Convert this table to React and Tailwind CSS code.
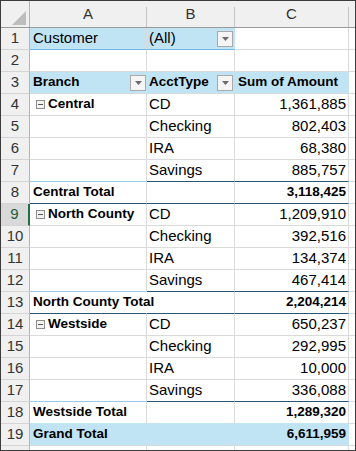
import React from "react";

const rows = [
  { n: 1, a: "Customer", b: "(All)", c: "", kind: "filter" },
  { n: 2, a: "", b: "", c: "", kind: "blank" },
  { n: 3, a: "Branch", b: "AcctType", c: "Sum of Amount", kind: "head" },
  { n: 4, a: "Central", b: "CD", c: "1,361,885", kind: "group" },
  { n: 5, a: "", b: "Checking", c: "802,403", kind: "item" },
  { n: 6, a: "", b: "IRA", c: "68,380", kind: "item" },
  { n: 7, a: "", b: "Savings", c: "885,757", kind: "last" },
  { n: 8, a: "Central Total", b: "", c: "3,118,425", kind: "total" },
  { n: 9, a: "North County", b: "CD", c: "1,209,910", kind: "group", selected: true },
  { n: 10, a: "", b: "Checking", c: "392,516", kind: "item" },
  { n: 11, a: "", b: "IRA", c: "134,374", kind: "item" },
  { n: 12, a: "", b: "Savings", c: "467,414", kind: "last" },
  { n: 13, a: "North County Total", b: "", c: "2,204,214", kind: "total", spill: true },
  { n: 14, a: "Westside", b: "CD", c: "650,237", kind: "group" },
  { n: 15, a: "", b: "Checking", c: "292,995", kind: "item" },
  { n: 16, a: "", b: "IRA", c: "10,000", kind: "item" },
  { n: 17, a: "", b: "Savings", c: "336,088", kind: "last" },
  { n: 18, a: "Westside Total", b: "", c: "1,289,320", kind: "totalLast" },
  { n: 19, a: "Grand Total", b: "", c: "6,611,959", kind: "grand" },
  { n: "", a: "", b: "", c: "", kind: "blank" },
];

const Dropdown = () => (
  <span className="flex h-4 w-4 shrink-0 items-center justify-center border border-[#a9a9a9] bg-[#f5f5f5]">
    <svg width="7" height="4" viewBox="0 0 7 4">
      <path d="M0 0h7L3.5 4z" fill="#6b6b6b" />
    </svg>
  </span>
);

const Collapse = () => (
  <span className="mr-[3px] ml-[6px] flex h-[9px] w-[9px] shrink-0 items-center justify-center border border-[#8e8e8e] bg-[#f2f2f2]">
    <span className="h-px w-[5px] bg-[#555]" />
  </span>
);

const ColHead = ({ label, w }) => (
  <div className={`flex ${w} h-full`}>
    <div className="flex-1 text-center text-[15px] leading-[26px] text-[#333]">{label}</div>
    <div className="mt-[6px] h-[20px] w-px bg-[#c4c4c4]" />
  </div>
);

function Row({ r }) {
  const blueAB = r.kind === "filter";
  const blueAll = r.kind === "head" || r.kind === "grand";
  const isTotal = r.kind === "total" || r.kind === "totalLast" || r.kind === "grand";
  const bold = r.kind === "head" || isTotal || r.kind === "group";

  let bA = "border-b-[#dadada]";
  let bB = "border-b-[#dadada]";
  let bC = "border-b-[#dadada]";
  if (r.kind === "filter") {
    bA = "border-b-[#6fb6e0]";
    bB = "border-b-[#6fb6e0]";
  }
  if (r.kind === "last") {
    bA = "border-b-[#9cc9e8]";
    bB = "border-b-[#2a5673]";
    bC = "border-b-[#2a5673]";
  }
  if (r.kind === "total") {
    bA = "border-b-[#2a5673]";
    bB = "border-b-[#2a5673]";
    bC = "border-b-[#2a5673]";
  }
  if (r.kind === "totalLast") {
    bA = "border-b-[#c1e4f5]";
    bB = "border-b-[#c1e4f5]";
    bC = "border-b-[#c1e4f5]";
  }

  const cellBase = "h-full border-b border-r flex items-center whitespace-nowrap";
  const bgAB = blueAB || blueAll ? "bg-[#c1e4f5]" : "bg-white";
  const bgC = blueAll ? "bg-[#c1e4f5]" : "bg-white";
  const rA = blueAll || r.spill ? "border-r-transparent" : "border-r-[#dadada]";
  const rB = blueAll ? "border-r-transparent" : blueAB ? "border-r-[#c1e4f5]" : "border-r-[#dadada]";
  const txtBold = "font-bold text-[13.5px]";
  const txtReg = "text-[15px]";

  return (
    <div className="flex h-[22px] shrink-0">
      <div
        className={`flex h-full w-[29px] shrink-0 items-center justify-center border-b border-r border-b-[#d4d4d4] text-[15px] ${
          r.selected ? "border-r-2 border-r-[#1e7145] bg-[#d9d9d9] text-[#1e5e3a]" : "border-r-[#b4b4b4] bg-[#f0f0f0] text-[#333]"
        }`}
      >
        {r.n}
      </div>
      <div className={`${cellBase} relative z-10 w-[117px] ${r.spill ? "overflow-visible" : "overflow-hidden"} ${bgAB} ${bA} ${rA}`}>
        {r.kind === "group" && <Collapse />}
        <span className={`${r.kind === "group" ? "" : "pl-[3px]"} flex-1 ${bold ? txtBold : txtReg}`}>{r.a}</span>
        {r.kind === "head" && <Dropdown />}
      </div>
      <div className={`${cellBase} w-[88px] overflow-hidden ${bgAB} ${bB} ${rB}`}>
        <span className={`flex-1 pl-[2px] ${r.kind === "head" ? txtBold : txtReg}`}>{r.b}</span>
        {(r.kind === "head" || r.kind === "filter") && (
          <span className="mr-px">
            <Dropdown />
          </span>
        )}
      </div>
      <div
        className={`${cellBase} w-[114px] justify-end overflow-hidden ${bgC} ${bC} ${
          r.kind === "head" || r.kind === "grand" ? "border-r-[#c1e4f5]" : "border-r-[#dadada]"
        }`}
      >
        <span className={`pr-[2px] ${r.kind === "head" ? "flex-1 pl-[3px] text-left" : ""} ${bold && r.kind !== "group" ? txtBold : txtReg}`}>
          {r.c}
        </span>
      </div>
      <div className="h-full w-[6px] border-b border-b-[#dadada] bg-white" />
    </div>
  );
}

export default function App() {
  return (
    <div className="h-[451px] w-[356px] overflow-hidden border border-[#3c3c3c] bg-white font-['Liberation_Sans',Arial,sans-serif] text-black">
      <div className="flex h-[27px] shrink-0 border-b border-b-[#9a9a9a] bg-[#f0f0f0]">
        <div className="relative h-full w-[29px] border-r border-r-[#b4b4b4]">
          <svg className="absolute right-[3px] bottom-[2px]" width="14" height="14" viewBox="0 0 14 14">
            <path d="M14 0V14H0z" fill="#bdbdbd" />
          </svg>
        </div>
        <ColHead label="A" w="w-[117px]" />
        <ColHead label="B" w="w-[88px]" />
        <ColHead label="C" w="w-[114px]" />
        <div className="h-full w-[6px]" />
      </div>
      {rows.map((r, i) => (
        <Row key={i} r={r} />
      ))}
    </div>
  );
}
